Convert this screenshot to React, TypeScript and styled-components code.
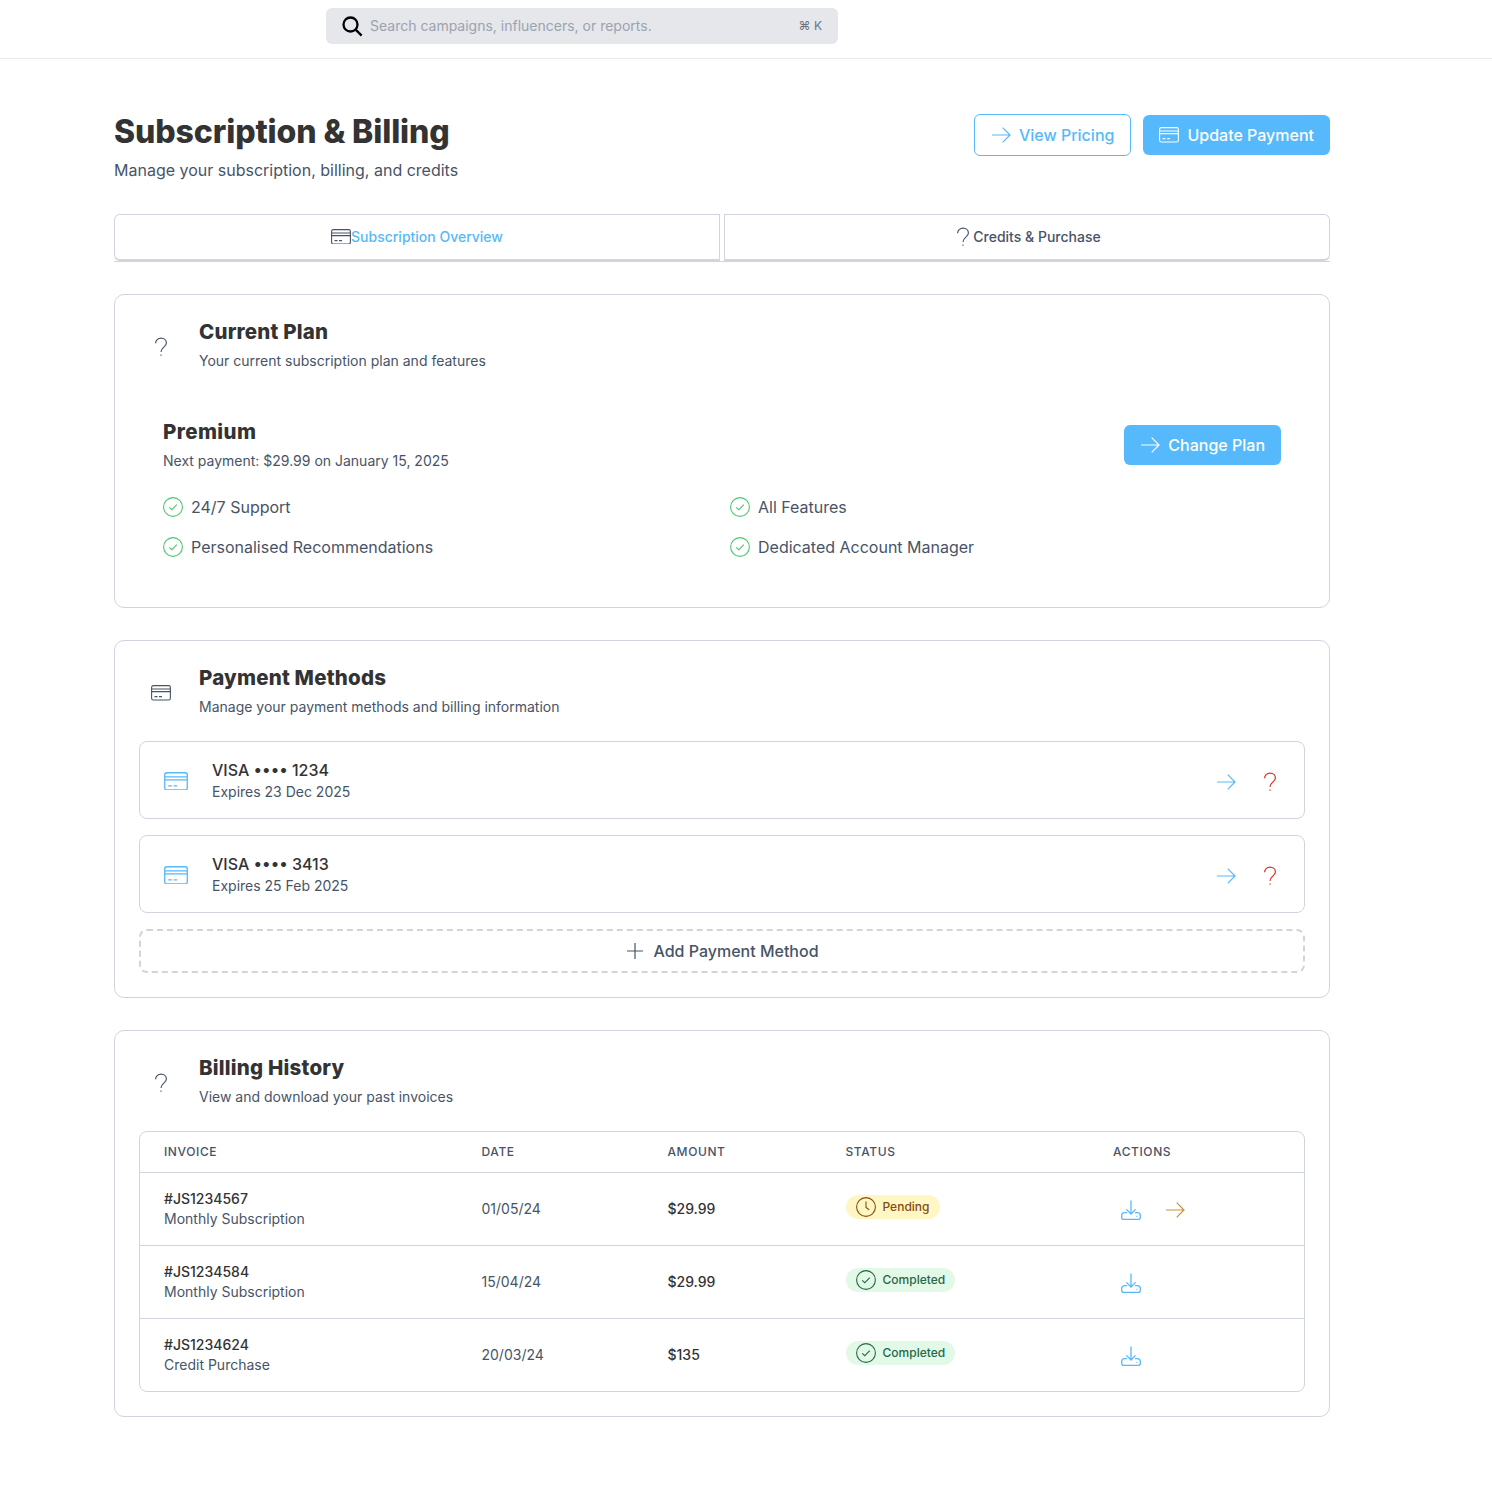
import styled, { createGlobalStyle } from 'styled-components';

const Blue = '#56b9fb';
const Ink = '#333333';
const Slate = '#475467';
const Line = '#d0d5dd';

const GlobalStyle = createGlobalStyle`
  * {
    box-sizing: border-box;
  }
  body {
    margin: 0;
    background: #ffffff;
    font-family: Inter, "Liberation Sans", sans-serif;
    color: ${Ink};
  }
`;

interface IconProps {
  size?: number;
  color?: string;
}

const ArrowIcon = ({ size = 20, color = 'currentColor' }: IconProps) => (
  <svg width={size} height={size} viewBox="0 0 20 20" fill="none" stroke={color} strokeWidth="1.2">
    <path d="M1 10h18M11.7 2.7l7.3 7.3-7.3 7.3" />
  </svg>
);

// tight viewBox: the card fills the full width
const CardIcon = ({ size = 20, color = 'currentColor' }: IconProps) => (
  <svg width={size} height={size * 0.78} viewBox="0 0 20 15.6" fill="none" stroke={color} strokeWidth="1.1">
    <rect x="0.6" y="0.6" width="18.8" height="14.4" rx="1.8" />
    <path d="M0.6 4h18.8M0.6 6.6h18.8M3.5 11.6h3M8 11.6h3" />
  </svg>
);

const QuestionIcon = ({ size = 20, color = 'currentColor' }: IconProps) => (
  <svg width={size} height={size} viewBox="0 0 20 20" fill="none" stroke={color} strokeWidth="1.2">
    <path d="M4.6 6.2C4.6 3.2 7 1.2 10 1.2c3 0 5.4 2 5.4 4.8 0 4-5.4 4.4-5.4 9" />
    <path d="M10 17.4v1.4" />
  </svg>
);

const CheckCircleIcon = ({ size = 20, color = 'currentColor' }: IconProps) => (
  <svg width={size} height={size} viewBox="0 0 20 20" fill="none" stroke={color} strokeWidth="1.1">
    <circle cx="10" cy="10" r="9.4" />
    <path d="M6.2 10.3l2.6 2.4 5-5" />
  </svg>
);

const ClockIcon = ({ size = 20, color = 'currentColor' }: IconProps) => (
  <svg width={size} height={size} viewBox="0 0 20 20" fill="none" stroke={color} strokeWidth="1.1">
    <circle cx="10" cy="10" r="9.4" />
    <path d="M10 4.6v5.8l3.2 2.4" />
  </svg>
);

const DownloadIcon = ({ size = 20, color = 'currentColor' }: IconProps) => (
  <svg width={size} height={size} viewBox="0 0 20 20" fill="none" stroke={color} strokeWidth="1.3">
    <path d="M10 0.5v13.5M5.4 9.4l4.6 4.6 4.6-4.6" />
    <path d="M6 12.6H3.4C1.8 12.6.7 14 .7 15.4v2.2c0 1 .8 1.8 1.8 1.8h15c1 0 1.8-.8 1.8-1.8v-2.2c0-1.4-1.1-2.8-2.7-2.8H14" />
    <path d="M15.4 16.4h.9" />
  </svg>
);

const PlusIcon = ({ size = 20, color = 'currentColor' }: IconProps) => (
  <svg width={size} height={size} viewBox="0 0 20 20" fill="none" stroke={color} strokeWidth="1.2">
    <path d="M10 2v16M2 10h16" />
  </svg>
);

const SearchIcon = () => (
  <svg width="24" height="24" viewBox="0 0 24 24" fill="none" stroke="#000000" strokeWidth="2.3">
    <circle cx="10.5" cy="10.5" r="7" />
    <path d="M15.6 15.6l6 6" />
  </svg>
);

const TopBar = styled.header`
  height: 59px;
  border-bottom: 1px solid #e8eaee;
  padding: 8px 0 0 326px;
`;

const SearchBox = styled.div`
  width: 512px;
  height: 36px;
  border-radius: 6px;
  background: #e5e7eb;
  display: flex;
  align-items: center;
  padding: 0 16px 0 14px;
  gap: 6px;
`;

const SearchText = styled.span`
  flex: 1;
  font-size: 14px;
  color: #9ca3af;
  margin-top: -2px;
`;

const Shortcut = styled.span`
  font-size: 12px;
  color: #6b7280;
  margin-top: -2px;
`;

const Page = styled.main`
  width: 1216px;
  margin-left: 114px;
  padding: 55px 0 77px;
`;

const PageHead = styled.div`
  display: flex;
  justify-content: space-between;
  align-items: flex-start;
  margin-bottom: 32px;
`;

const Title = styled.h1`
  margin: 0;
  font-size: 32px;
  line-height: 36px;
  font-weight: 800;
  letter-spacing: -0.1px;
  color: ${Ink};
`;

const Subtitle = styled.p`
  margin: 8px 0 0;
  font-size: 16px;
  line-height: 24px;
  color: ${Slate};
`;

const HeadActions = styled.div`
  display: flex;
  align-items: center;
  gap: 12px;
`;

const Button = styled.button<{ $outline?: boolean }>`
  height: ${(p) => (p.$outline ? '42px' : '40px')};
  display: inline-flex;
  align-items: center;
  gap: 8px;
  padding: 0 16px;
  border-radius: 6px;
  border: ${(p) => (p.$outline ? `1px solid ${Blue}` : 'none')};
  background: ${(p) => (p.$outline ? '#ffffff' : Blue)};
  color: ${(p) => (p.$outline ? Blue : '#ffffff')};
  font-family: inherit;
  font-size: 16px;
  font-weight: 500;
`;

const Tabs = styled.div`
  display: flex;
  gap: 4px;
  border-bottom: 1px solid ${Line};
  margin-bottom: 32px;
`;

const Tab = styled.div<{ $active?: boolean }>`
  flex: 1;
  height: 47px;
  padding-bottom: 1px;
  display: flex;
  align-items: center;
  justify-content: center;
  border: 1px solid ${Line};
  border-bottom-width: 2px;
  border-radius: ${(p) => (p.$active ? '6px 0 0 6px' : '0 6px 6px 0')};
  font-size: 14px;
  font-weight: 500;
  color: ${(p) => (p.$active ? Blue : Slate)};
`;

const TabIcon = styled.span`
  display: flex;
  color: ${Slate};
`;

const Panel = styled.section`
  border: 1px solid ${Line};
  border-radius: 10px;
  padding: 24px;
  margin-bottom: 32px;
  &:last-child {
    margin-bottom: 0;
  }
`;

const PanelHead = styled.div`
  display: flex;
  align-items: center;
  gap: 26px;
  margin-bottom: 24px;
  color: ${Slate};
`;

const PanelIcon = styled.span`
  width: 24px;
  margin: 4px 0 0 10px;
  display: flex;
  justify-content: center;
`;

const PanelTitle = styled.h2`
  margin: 0;
  font-size: 20.5px;
  line-height: 26px;
  font-weight: 800;
  letter-spacing: 0.2px;
  color: ${Ink};
`;

const PanelText = styled.p`
  margin: 6px 0 0;
  font-size: 14px;
  line-height: 20px;
  color: ${Slate};
`;

const PlanBody = styled.div`
  padding: 24px;
`;

const PlanRow = styled.div`
  display: flex;
  justify-content: space-between;
  align-items: center;
  margin-bottom: 24px;
`;

const PlanName = styled.h3`
  margin: 0;
  font-size: 20.5px;
  line-height: 26px;
  font-weight: 800;
  letter-spacing: 0.4px;
  color: ${Ink};
`;

const Features = styled.div`
  display: grid;
  grid-template-columns: 567px 1fr;
  row-gap: 16px;
`;

const Feature = styled.div`
  height: 24px;
  display: flex;
  align-items: center;
  gap: 8px;
  font-size: 16px;
  color: ${Slate};
`;

const MethodList = styled.div`
  display: flex;
  flex-direction: column;
  gap: 16px;
`;

const Method = styled.div`
  height: 78px;
  display: flex;
  align-items: center;
  border: 1px solid ${Line};
  border-radius: 8px;
  padding: 0 24px;
`;

const MethodCard = styled.span`
  display: flex;
  margin-top: 2px;
`;

const MethodInfo = styled.div`
  flex: 1;
  margin-left: 24px;
`;

const MethodName = styled.div`
  font-size: 16px;
  line-height: 24px;
  font-weight: 500;
  color: ${Ink};
`;

const MethodExpiry = styled.div`
  font-size: 14px;
  line-height: 20px;
  color: ${Slate};
`;

const MethodActions = styled.div`
  display: flex;
  gap: 24px;
  margin-top: 4px;
`;

const AddMethod = styled.div`
  height: 44px;
  display: flex;
  align-items: center;
  justify-content: center;
  gap: 8px;
  border: 2px dashed ${Line};
  border-radius: 8px;
  font-size: 16px;
  font-weight: 500;
  color: ${Slate};
`;

const TableWrap = styled.div`
  border: 1px solid ${Line};
  border-radius: 8px;
  overflow: hidden;
`;

const Table = styled.table`
  width: 100%;
  border-collapse: collapse;
  table-layout: fixed;
`;

const Th = styled.th<{ $width: number }>`
  width: ${(p) => p.$width}px;
  height: 40px;
  padding: 0 0 0 24px;
  text-align: left;
  font-size: 12px;
  font-weight: 500;
  letter-spacing: 0.6px;
  color: ${Slate};
`;

const Tr = styled.tr`
  height: 73px;
  border-top: 1px solid ${Line};
`;

const Td = styled.td<{ $strong?: boolean }>`
  padding: 0 0 0 24px;
  font-size: 14px;
  line-height: 20px;
  font-weight: ${(p) => (p.$strong ? 500 : 400)};
  color: ${(p) => (p.$strong ? Ink : Slate)};
`;

const InvoiceId = styled.div`
  font-weight: 500;
  color: ${Ink};
`;

const Badge = styled.span<{ $tone: 'pending' | 'done' }>`
  display: inline-flex;
  align-items: center;
  gap: 7px;
  height: 24px;
  padding: 0 10px;
  border-radius: 12px;
  font-size: 12px;
  font-weight: 500;
  background: ${(p) => (p.$tone === 'pending' ? '#fef7c3' : '#e3f9e8')};
  color: ${(p) => (p.$tone === 'pending' ? '#854d0e' : '#276749')};
`;

const RowActions = styled.div`
  display: flex;
  gap: 24px;
  margin: 2px 0 0 8px;
`;

const invoices = [
  { id: '#JS1234567', kind: 'Monthly Subscription', date: '01/05/24', amount: '$29.99', pending: true },
  { id: '#JS1234584', kind: 'Monthly Subscription', date: '15/04/24', amount: '$29.99', pending: false },
  { id: '#JS1234624', kind: 'Credit Purchase', date: '20/03/24', amount: '$135', pending: false },
];

const cards = [
  { name: 'VISA •••• 1234', expiry: 'Expires 23 Dec 2025' },
  { name: 'VISA •••• 3413', expiry: 'Expires 25 Feb 2025' },
];

const features = ['24/7 Support', 'All Features', 'Personalised Recommendations', 'Dedicated Account Manager'];

export default function App() {
  return (
    <>
      <GlobalStyle />
      <TopBar>
        <SearchBox>
          <SearchIcon />
          <SearchText>Search campaigns, influencers, or reports.</SearchText>
          <Shortcut>⌘ K</Shortcut>
        </SearchBox>
      </TopBar>
      <Page>
        <PageHead>
          <div>
            <Title>Subscription &amp; Billing</Title>
            <Subtitle>Manage your subscription, billing, and credits</Subtitle>
          </div>
          <HeadActions>
            <Button $outline>
              <ArrowIcon />
              View Pricing
            </Button>
            <Button>
              <CardIcon />
              Update Payment
            </Button>
          </HeadActions>
        </PageHead>

        <Tabs>
          <Tab $active>
            <TabIcon>
              <CardIcon />
            </TabIcon>
            Subscription Overview
          </Tab>
          <Tab>
            <TabIcon>
              <QuestionIcon />
            </TabIcon>
            Credits &amp; Purchase
          </Tab>
        </Tabs>

        <Panel>
          <PanelHead>
            <PanelIcon>
              <QuestionIcon />
            </PanelIcon>
            <div>
              <PanelTitle>Current Plan</PanelTitle>
              <PanelText>Your current subscription plan and features</PanelText>
            </div>
          </PanelHead>
          <PlanBody>
            <PlanRow>
              <div>
                <PlanName>Premium</PlanName>
                <PanelText>Next payment: $29.99 on January 15, 2025</PanelText>
              </div>
              <Button>
                <ArrowIcon />
                Change Plan
              </Button>
            </PlanRow>
            <Features>
              {features.map((f) => (
                <Feature key={f}>
                  <CheckCircleIcon color="#4cc76e" />
                  {f}
                </Feature>
              ))}
            </Features>
          </PlanBody>
        </Panel>

        <Panel>
          <PanelHead>
            <PanelIcon>
              <CardIcon />
            </PanelIcon>
            <div>
              <PanelTitle>Payment Methods</PanelTitle>
              <PanelText>Manage your payment methods and billing information</PanelText>
            </div>
          </PanelHead>
          <MethodList>
            {cards.map((c) => (
              <Method key={c.name}>
                <MethodCard>
                  <CardIcon size={24} color={Blue} />
                </MethodCard>
                <MethodInfo>
                  <MethodName>{c.name}</MethodName>
                  <MethodExpiry>{c.expiry}</MethodExpiry>
                </MethodInfo>
                <MethodActions>
                  <ArrowIcon color={Blue} />
                  <QuestionIcon color="#d92d20" />
                </MethodActions>
              </Method>
            ))}
            <AddMethod>
              <PlusIcon />
              Add Payment Method
            </AddMethod>
          </MethodList>
        </Panel>

        <Panel>
          <PanelHead>
            <PanelIcon>
              <QuestionIcon />
            </PanelIcon>
            <div>
              <PanelTitle>Billing History</PanelTitle>
              <PanelText>View and download your past invoices</PanelText>
            </div>
          </PanelHead>
          <TableWrap>
            <Table>
              <thead>
                <tr>
                  <Th $width={317.5}>INVOICE</Th>
                  <Th $width={186}>DATE</Th>
                  <Th $width={178}>AMOUNT</Th>
                  <Th $width={267.5}>STATUS</Th>
                  <Th $width={215}>ACTIONS</Th>
                </tr>
              </thead>
              <tbody>
                {invoices.map((inv) => (
                  <Tr key={inv.id}>
                    <Td>
                      <InvoiceId>{inv.id}</InvoiceId>
                      {inv.kind}
                    </Td>
                    <Td>{inv.date}</Td>
                    <Td $strong>{inv.amount}</Td>
                    <Td>
                      <Badge $tone={inv.pending ? 'pending' : 'done'}>
                        {inv.pending ? <ClockIcon /> : <CheckCircleIcon />}
                        {inv.pending ? 'Pending' : 'Completed'}
                      </Badge>
                    </Td>
                    <Td>
                      <RowActions>
                        <DownloadIcon color={Blue} />
                        {inv.pending && <ArrowIcon color="#c98f3c" />}
                      </RowActions>
                    </Td>
                  </Tr>
                ))}
              </tbody>
            </Table>
          </TableWrap>
        </Panel>
      </Page>
    </>
  );
}
